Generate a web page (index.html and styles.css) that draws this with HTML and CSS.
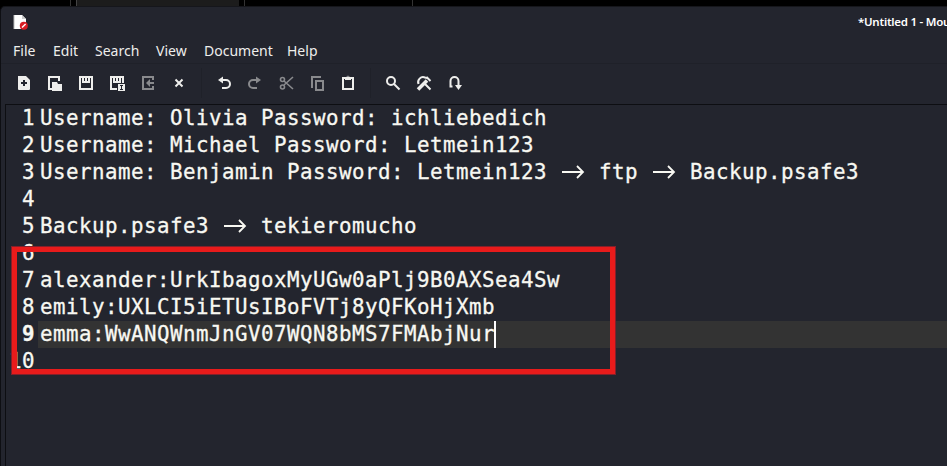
FILE: index.html
```html
<!DOCTYPE html>
<html lang="en">
<head>
<meta charset="utf-8">
<title>*Untitled 1 - Mousepad</title>
<link rel="stylesheet" href="styles.css">
</head>
<body>
<div class="panel"><span class="task"></span><span class="line"></span></div>
<div class="window">
  <header class="titlebar">
    <svg class="app" viewBox="0 0 15 16"><path d="M1 1h8l4 4v10H1z" fill="#fff"/><path d="M9 1v4h4z" fill="#ccc"/><path d="M1 1v14" stroke="#bbb"/><circle cx="10.8" cy="11.8" r="4" fill="#d81c24"/><path d="M9 13.6l3.6-3.6" stroke="#fff" stroke-width="1.4"/></svg>
    <span class="title">*Untitled 1 - Mou</span>
  </header>
  <nav class="menubar"><span class="m1">File</span><span class="m2">Edit</span><span class="m3">Search</span><span class="m4">View</span><span class="m5">Document</span><span class="m6">Help</span></nav>
  <div class="toolbar">
    <svg viewBox="0 0 31 22"><path class="f" fill-rule="evenodd" d="M10 4h8l4 4v9q0 1-1 1H11q-1 0-1-1zM15 8v2h-2v2h2v2h2v-2h2v-2h-2V8z"/></svg>
    <svg viewBox="0 0 31 22"><path d="M13 17h-3V5h10v4" class="s"/><path class="f" d="M13 10h5l1 2h4v7H13z"/></svg>
    <svg viewBox="0 0 31 22"><path class="f" fill-rule="evenodd" d="M9 4h14v14H9zM11 6v10h10V6h-1v5h-8V6zM14 6v3h1V6zM17 6v3h1V6z"/></svg>
    <svg viewBox="0 0 31 22"><path class="f" fill-rule="evenodd" d="M9 4h14v7h-2V6h-1v5h-8V6h-1v10h5v2H9zM14 6v3h1V6zM17 6v3h1V6z"/><path class="f" d="M17 12h7v7h-7z"/><path d="M19 13.5h3M20.5 13.5v4M19 17.5h3" stroke="#23252e" fill="none"/></svg>
    <svg class="off" viewBox="0 0 31 22"><path class="s" d="M21 8V5H11v12h10v-3"/><path class="s" d="M22 11h-6"/><path class="f" d="M18 7v8l-4-4z"/></svg>
    <svg viewBox="0 0 31 22"><path class="s" d="M12.5 7.5l7 7M19.5 7.5l-7 7"/></svg>
    <i class="sep s1"></i>
    <svg viewBox="0 0 31 22"><path class="s" d="M10 8h6a4 4 0 0 1 0 8h-4"/><path class="f" d="M13 4.5v7L8 8z"/></svg>
    <svg class="off" viewBox="0 0 31 22"><path class="s" d="M18 8h-6a4 4 0 0 0 0 8h4"/><path class="f" d="M15 4.5v7L20 8z"/></svg>
    <svg class="off" viewBox="0 0 31 22"><path class="n" d="M12 13L21 5M12 9l9 8"/><circle class="n" cx="10.5" cy="7.5" r="2"/><circle class="n" cx="10.5" cy="15" r="2"/></svg>
    <svg class="off" viewBox="0 0 31 22"><path class="s" d="M9 16V5h9"/><path class="s" d="M13 9h7v9h-7z"/></svg>
    <svg viewBox="0 0 31 22"><path class="s" d="M9 6h10v11H9z"/><path class="f" d="M11 5h1.5a1.6 2 0 0 1 3 0H17v3h-6z"/><path d="M13.5 4h1v1h-1z" fill="#23252e"/></svg>
    <i class="sep s2"></i>
    <svg viewBox="0 0 31 22"><circle class="s" cx="13" cy="9" r="4"/><path class="s" d="M16 12l5.5 5.5"/></svg>
    <svg viewBox="0 0 31 22"><path class="s" d="M9.500 12a5 5 0 0 1 6.500-6.500l2 .5M16 12l5.500 5.500"/><path d="M9 17.500L18 8.500" stroke="#eeeeec" stroke-width="3.5"/><path class="s" d="M17.500 5l4 4"/></svg>
    <svg viewBox="0 0 31 22"><path class="s" d="M12.500 14.500H9.500M10.500 14V9a4 4 0 0 1 8 0v5"/><path class="f" d="M15 13h7l-3.500 5z"/></svg>
  </div>
  <main class="editor">
    <div class="row"><b>1</b><p>Username: Olivia Password: ichliebedich</p></div>
    <div class="row"><b>2</b><p>Username: Michael Password: Letmein123</p></div>
    <div class="row"><b>3</b><p>Username: Benjamin Password: Letmein123 <svg class="arrow" viewBox="0 0 26 16"><path d="M2 8h21M17 2l6 6-6 6"/></svg> ftp <svg class="arrow" viewBox="0 0 26 16"><path d="M2 8h21M17 2l6 6-6 6"/></svg> Backup.psafe3</p></div>
    <div class="row"><b>4</b><p></p></div>
    <div class="row"><b>5</b><p>Backup.psafe3 <svg class="arrow" viewBox="0 0 26 16"><path d="M2 8h21M17 2l6 6-6 6"/></svg> tekieromucho</p></div>
    <div class="row"><b>6</b><p></p></div>
    <div class="row"><b>7</b><p>alexander:UrkIbagoxMyUGw0aPlj9B0AXSea4Sw</p></div>
    <div class="row"><b>8</b><p>emily:UXLCI5iETUsIBoFVTj8yQFKoHjXmb</p></div>
    <div class="row current"><b>9</b><p>emma:WwANQWnmJnGV07WQN8bMS7FMAbjNur<i class="caret"></i></p></div>
    <div class="row"><b>10</b><p></p></div>
  </main>
</div>
<div class="marker"></div>
</body>
</html>
```
FILE: styles.css
```css
* { box-sizing: border-box; }
body { margin: 0; width: 947px; height: 466px; overflow: hidden; background: #000; position: relative; }
.panel { height: 6px; padding-left: 70px; display: flex; }
.panel::before { content: ""; width: 1px; background: #333; margin-right: 5px; }
.task { width: 168px; background: #1c1c1c; border-left: 1px solid #444; border-right: 5px solid #000; }
.task { width: 168px; }
.line { width: 169px; border-left: 1px solid #333; border-right: 1px solid #333; }
.window { height: 460px; border-top: 1px solid #15161b; border-left: 1px solid #0e0f13; border-top-left-radius: 5px; background: #23252e; display: flex; flex-direction: column; color: #eeeeec; }
.titlebar { height: 31px; flex: none; display: flex; align-items: center; padding: 0 0 2px 12px; overflow: hidden; }
.app { width: 15px; height: 16px; flex: none; }
.title { margin-left: 830px; white-space: nowrap; font: 600 11.5px "Noto Sans", sans-serif; letter-spacing: -.25px; color: #fff; }
.menubar { height: 26px; flex: none; display: flex; border-bottom: 1px solid #1f2129; font: 14px/25px "Noto Sans", sans-serif; padding-left: 12px; }
.menubar span { white-space: nowrap; }
.m1 { width: 40px; } .m2 { width: 42px; } .m3 { width: 61px; } .m4 { width: 48px; } .m5 { width: 83px; }
.toolbar { height: 40px; flex: none; padding: 8px 0 0 7px; display: flex; }
.toolbar svg { width: 31px; height: 22px; flex: none; }
.f { fill: #eeeeec; }
.s { fill: none; stroke: #eeeeec; stroke-width: 2; }
.n { fill: none; stroke: #eeeeec; stroke-width: 1.6; }
.off { opacity: .5; }
.sep { width: 1px; height: 30px; margin-top: -4px; background: #1f2129; }
.s1 { margin-left: 7px; margin-right: 8px; }
.s2 { margin-left: 5px; margin-right: 7px; }
.editor { flex: 1; margin-left: 4px; border-left: 1px solid #0d0e12; border-top: 1px solid #0d0e12; font: 20.8px/27px "DejaVu Sans Mono", monospace; letter-spacing: .48px; color: #f8f8f2; -webkit-text-stroke: .3px #f8f8f2; }
.row { height: 27px; display: flex; }
.row b { width: 32px; flex: none; padding-right: 3px; display: flex; justify-content: flex-end; font-weight: 400; }
.row p { margin: 0; flex: 1; padding-left: 2px; white-space: pre; }
.current b { font-weight: 700; }
.current p { background: #333; display: flex; }
.caret { width: 2px; height: 27px; margin-left: -1px; background: #fff; }
.arrow { width: 26px; height: 16px; vertical-align: -1px; fill: none; stroke: #f8f8f2; stroke-width: 1.8; }
.marker { position: absolute; left: 11px; top: 246px; width: 605px; height: 129px; border: 6px solid #e81b1b; outline: 1px solid #84202a; outline-offset: -1px; }
```
